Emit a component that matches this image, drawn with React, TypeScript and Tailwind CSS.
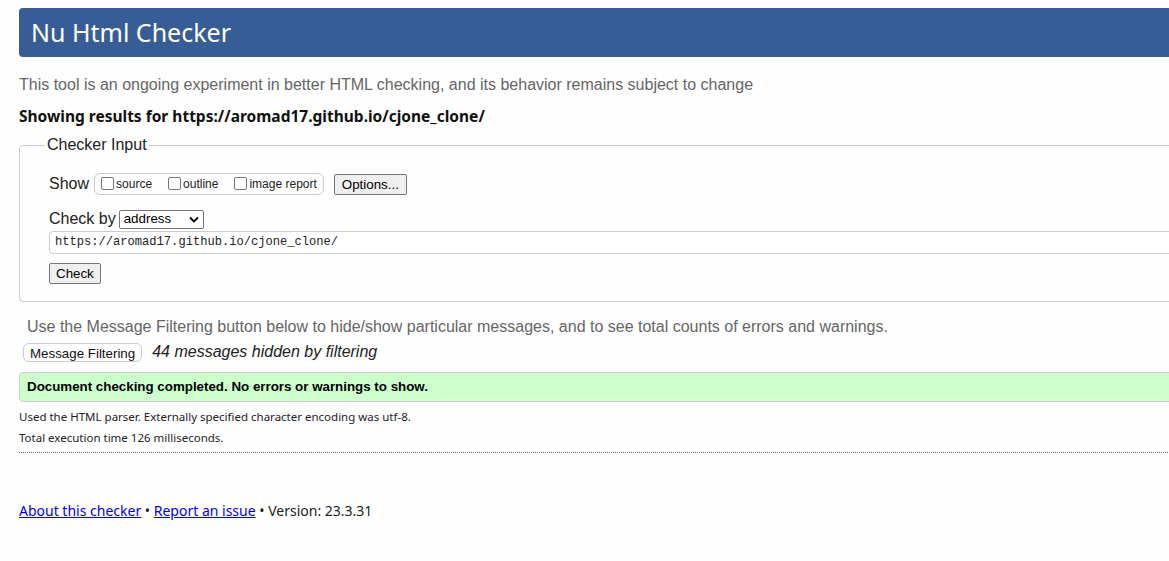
import React from 'react';

const arial = "font-['Liberation_Sans',Arial,sans-serif]";
const segoe = "font-['Noto_Sans',sans-serif]";

const Box = () => <span className="inline-block w-[13px] h-[13px] border border-[#767676] rounded-[2px] bg-white mr-[2px] align-[-2px]" />;

export default function App() {
  return (
    <div className="w-[1169px] h-[561px] overflow-hidden bg-[#fefefe]">
      <div className={`w-[1500px] pt-2 pl-[19px] ${arial}`}>
        <h1 className={`h-[49px] rounded-[4px] bg-[#365d95] text-white text-[25px] leading-[49px] pl-3 ${segoe}`}>Nu Html Checker</h1>

        <p className="mt-[18px] text-[16px] leading-[20px] text-[#666]">This tool is an ongoing experiment in better HTML checking, and its behavior remains subject to change</p>
        <p className={`mt-[10px] text-[15.5px] leading-[22px] font-bold text-[#111] ${segoe}`}>Showing results for https://aromad17.github.io/cjone_clone/</p>

        <fieldset className="mt-[8px] border border-[#ccc] rounded-[4px] pl-[29px] pr-0 pb-[16px] pt-[8px]">
          <legend className="-ml-[4px] px-[2px] text-[16px] leading-[20px] text-[#222]">Checker Input</legend>
          <div className="flex items-center h-[22px] mt-[10px]">
            <span className="text-[16px] text-[#222] mr-[5px]">Show</span>
            <span className="flex items-center h-[22px] border border-[#ccc] rounded-[6px] px-[6px] text-[12px] text-[#222]">
              <label className="mr-[16px]"><Box />source</label>
              <label className="mr-[16px]"><Box />outline</label>
              <label><Box />image report</label>
            </span>
            <button className="ml-[10px] h-[21px] px-[7px] border border-[#767676] rounded-[2px] bg-[#efefef] text-[13.33px] text-black">Options...</button>
          </div>
          <div className="flex items-center mt-[14px] h-[20px]">
            <span className="text-[16px] text-[#222] mr-[3px]">Check by</span>
            <span className="flex items-center justify-between w-[85px] h-[19px] border border-[#767676] rounded-[2px] bg-white pl-[4px] pr-[4px] text-[13.33px] text-black">
              address
              <svg width="10" height="7" viewBox="0 0 10 7"><path d="M1 1.5 5 5.5 9 1.5" fill="none" stroke="#000" strokeWidth="1.8" /></svg>
            </span>
          </div>
          <div className="mt-[2px] h-[23px] border border-[#ccc] rounded-[4px] bg-white pl-[5px] flex items-center font-['Liberation_Mono',monospace] text-[12.1px] text-[#222]">https://aromad17.github.io/cjone_clone/</div>
          <button className="mt-[9px] h-[21px] px-[6px] border border-[#767676] rounded-[2px] bg-[#efefef] text-[13.33px] text-black">Check</button>
        </fieldset>

        <p className="mt-[15px] ml-[8px] text-[16px] leading-[20px] text-[#666]">Use the Message Filtering button below to hide/show particular messages, and to see total counts of errors and warnings.</p>
        <div className="flex items-center mt-[5px] ml-[4px] h-[20px]">
          <button className="h-[19px] px-[6px] border border-[#ccc] rounded-[6px] bg-white text-[13.33px] text-[#111]">Message Filtering</button>
          <span className="ml-[10px] text-[16px] italic text-[#222]">44 messages hidden by filtering</span>
        </div>
        <div className="mt-[10px] h-[30px] border border-[#ccc] rounded-[4px] bg-[#ccffcc] pl-[7px] flex items-center text-[13.33px] font-bold text-black">Document checking completed. No errors or warnings to show.</div>

        <p className={`mt-[4px] text-[11.5px] leading-[21px] text-[#222] ${segoe}`}>Used the HTML parser. Externally specified character encoding was utf-8.</p>
        <p className={`text-[11.5px] leading-[21px] text-[#222] ${segoe}`}>Total execution time 126 milliseconds.</p>
        <div className="mt-[4px] border-t border-dotted border-[#666]" />

        <p className={`mt-[47px] text-[14px] text-[#222] ${segoe}`}>
          <a href="#" className="text-[#0000ee] underline">About this checker</a> • <a href="#" className="text-[#0000ee] underline">Report an issue</a> • Version: 23.3.31
        </p>
      </div>
    </div>
  );
}
